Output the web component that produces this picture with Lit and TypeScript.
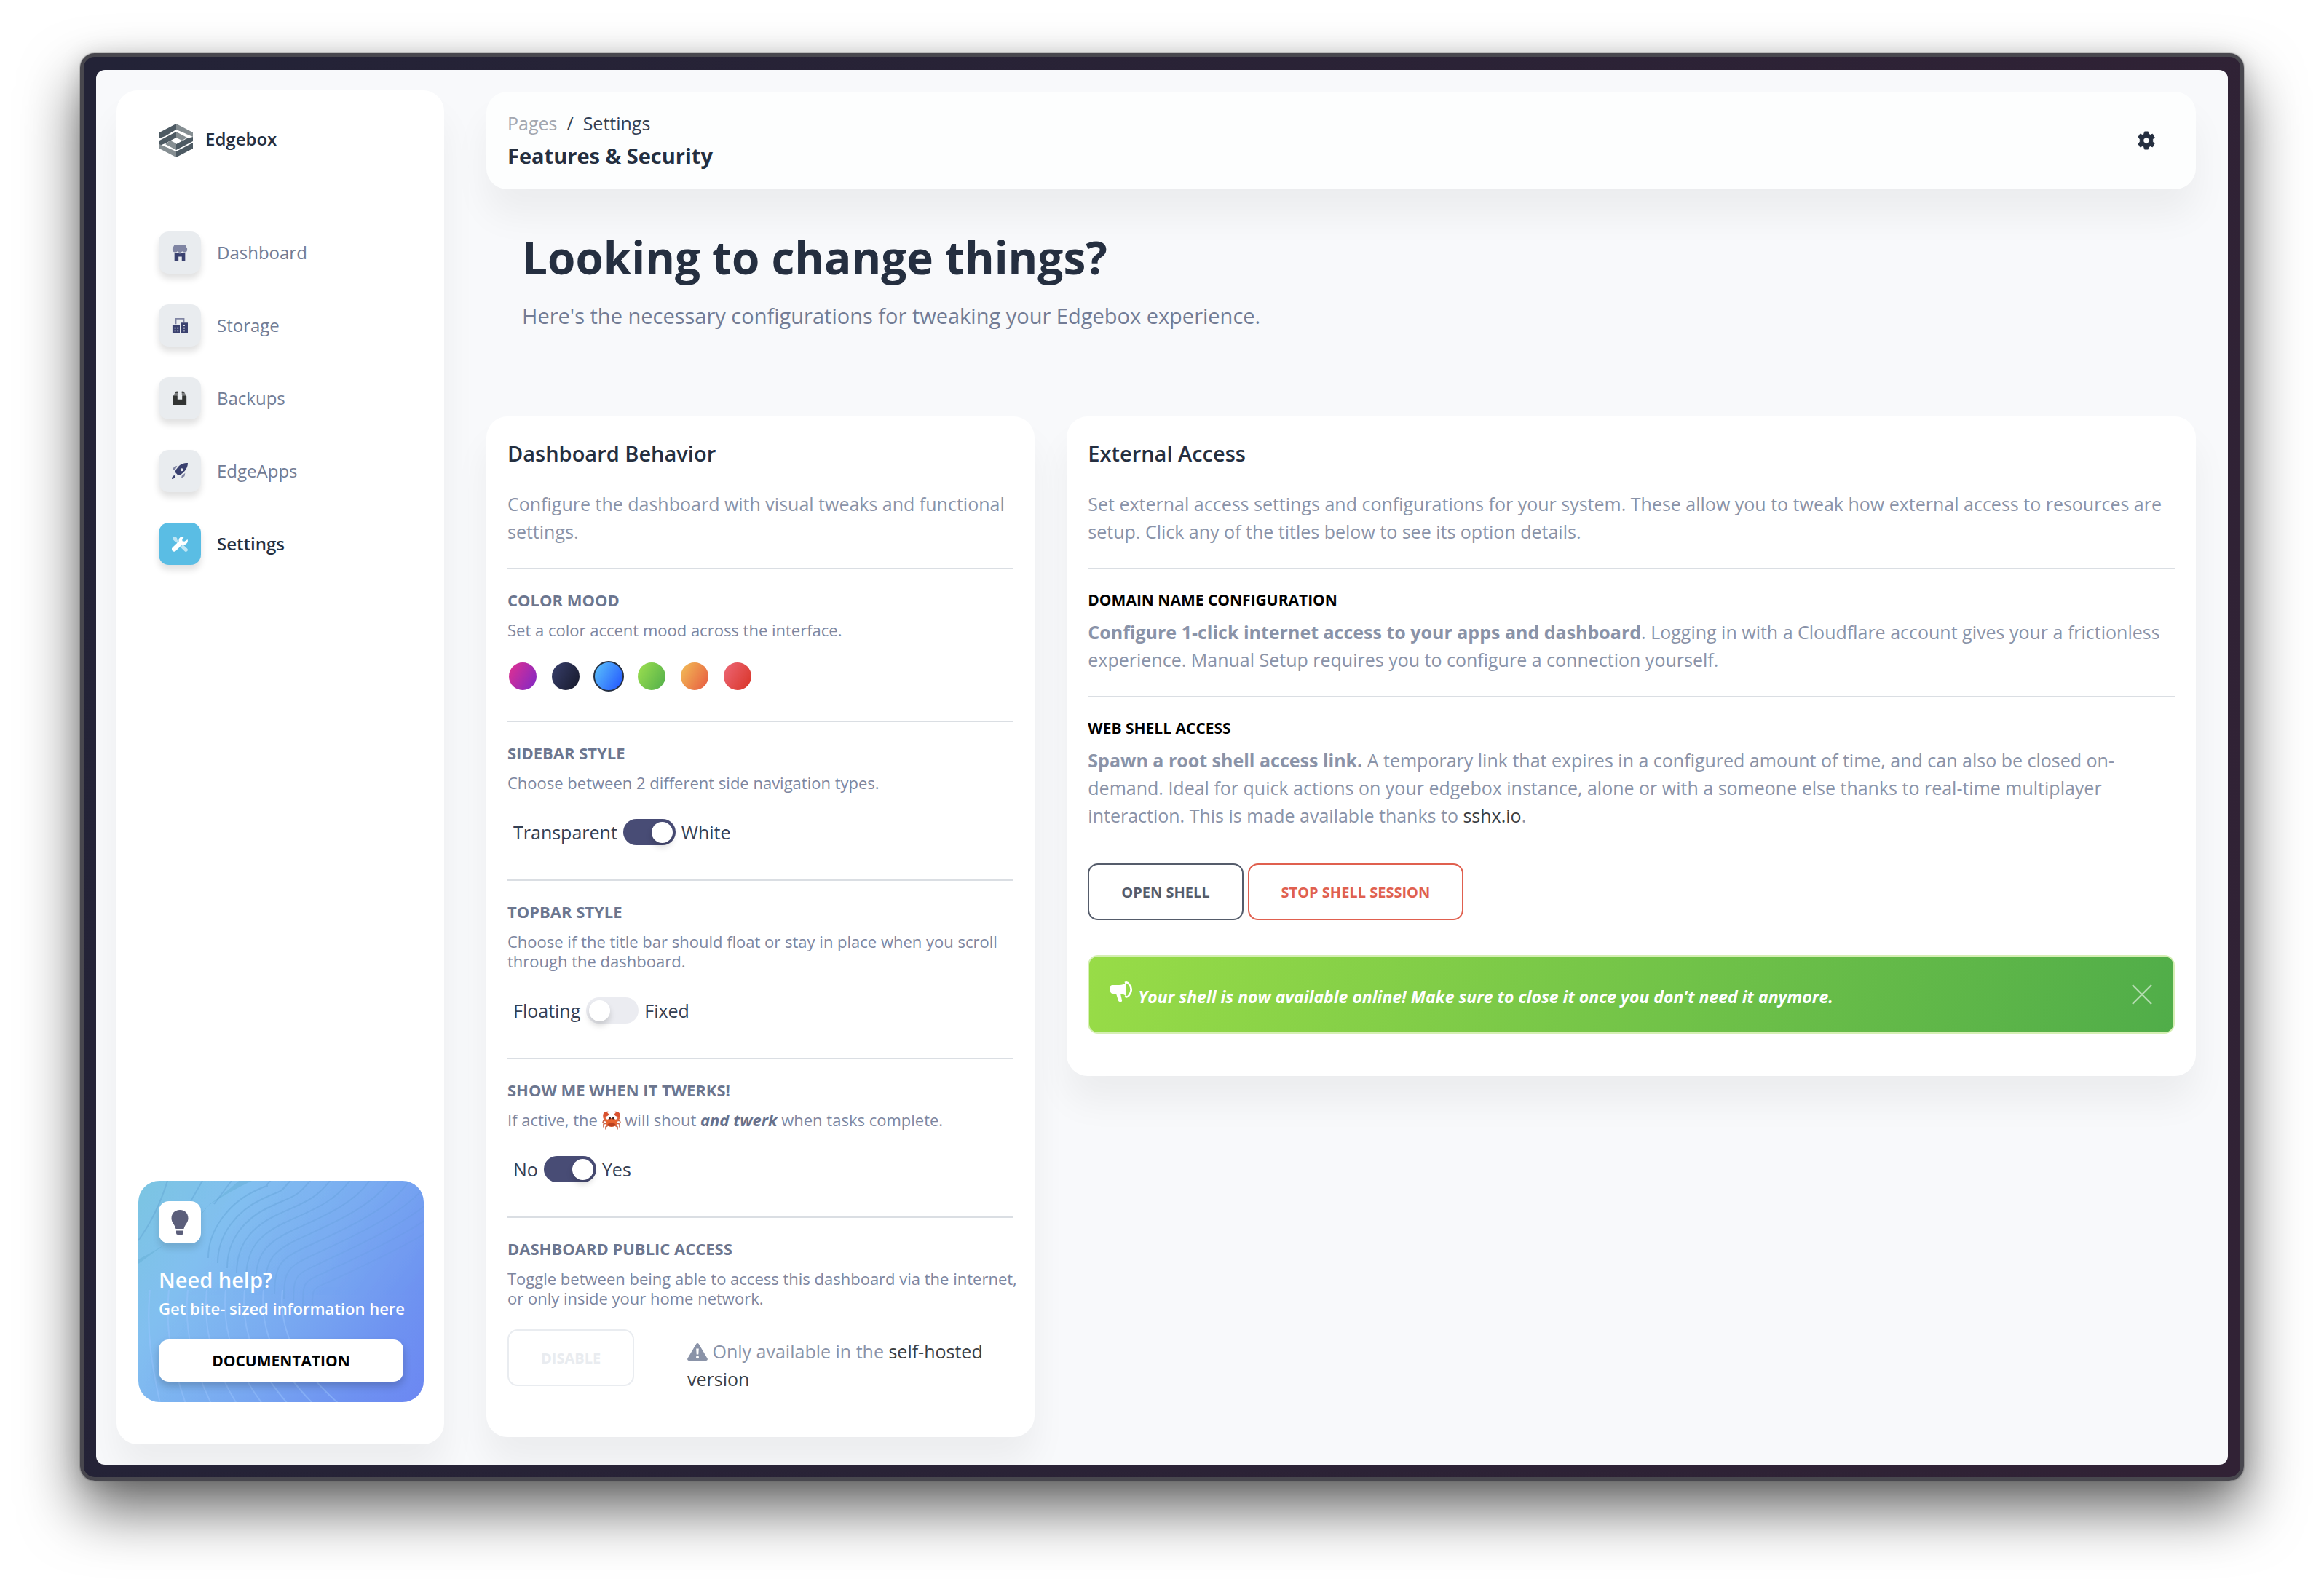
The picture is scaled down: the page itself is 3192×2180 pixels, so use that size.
import { LitElement, html, svg, css, nothing } from "lit";
import { customElement, property, state } from "lit/decorators.js";

const icons: Record<string, unknown> = {
  shop: svg`
    <path class="soft" d="M4 0h16l3 6v2a4 3.600 0 0 1-3.700 3.500A4 4 0 0 1 15.600 10a4.400 4.400 0 0 1-7.200 0 4 4 0 0 1-3.700 1.500A4 3.600 0 0 1 1 8V6z"/>
    <path class="solid" d="M4 13a6 6 0 0 0 4.400-.8 6.500 6.500 0 0 0 7.200 0A6 6 0 0 0 20 13v11h-5v-6h-5v6H4z"/>`,
  office: svg`
    <path class="soft" d="M5 1h14v7h-2V3H7v7H5z"/>
    <path class="solid" fill-rule="evenodd" d="M1 12h11v12H1zM14 8h10v16H14zM4 15h2v2H4zM8 15h2v2H8zM4 19h2v2H4zM8 19h2v2H8zM17.500 11h2v2h-2zM17.500 15h2v2h-2zM17.500 19h2v2h-2z"/>`,
  backup: svg`
    <path class="solid" d="M3 8h5.500v6h7V8H21a1 1 0 0 1 1 1v14H2V9a1 1 0 0 1 1-1z"/>
    <path class="soft" d="M6 2h3v5H3zM15 2h3l3 5h-6z"/>
    <path class="solid" d="M5 3l2-1h2v2H5zM15 2h2l2 2h-4z"/>`,
  rocket: svg`
    <path class="solid" fill-rule="evenodd" d="M24 0c-8 0-13 3-16 8-3 3-3 5-2 7l3 3c2 1 4 0 6-2 5-4 9-9 9-16zM15 8a2.200 2.200 0 1 1 0 4.400A2.200 2.200 0 0 1 15 8z"/>
    <path class="soft" d="M8 4L3 6 1 11l4-1zM20 15l-1 5-5 3 1-4z"/>
    <path class="solid" d="M4 18.500c-2 .5-4 2-4 5.500 3.500 0 5-2 5.500-4z"/>`,
  tools: svg`
    <path class="soft" d="M2 1.500L6 1l2 3v2l4 4-2.500 2.500L5 8H4L1 5zM15 13l3 1.500 5 4.500a2.600 2.600 0 0 1-4 4l-5-5z"/>
    <path class="solid" d="M23.500 5.500L19 8.500 15.800 8 15.500 5l3-3.500a6 6 0 0 0-8 7L1 17.500a3 3 0 0 0 5 5L15.500 13a6 6 0 0 0 8-7.500z"/>`,
};

const svgIcon = (name: string) =>
  html`<svg class="glyph" viewBox="0 0 24 24" aria-hidden="true">${icons[name]}</svg>`;

const warningIcon = html`<svg class="warn" viewBox="0 0 28 24" aria-hidden="true">
  <path fill="currentColor" fill-rule="evenodd" d="M12.300 1a2 2 0 0 1 3.400 0l11.900 20a2 2 0 0 1-1.700 3H2.100a2 2 0 0 1-1.700-3zM12.200 7.500l.5 8h2.600l.5-8zM14 17.200a2 2 0 1 0 0 4 2 2 0 0 0 0-4z"/>
</svg>`;

const crab = html`<svg class="crab" viewBox="0 0 26 26" role="img" aria-label="crab">
  <g fill="none" stroke="#c9654a" stroke-width="1.600" stroke-linecap="round">
    <path d="M6 14l-4-1-1 3M6 17l-4 1v4M8 20l-3 2v3M20 14l4-1 1 3M20 17l4 1v4M18 20l3 2v3"/>
  </g>
  <path fill="none" stroke="#e0663f" stroke-width="3" d="M7 14Q1 10 3.500 5M19 14q6-4 3.500-9"/>
  <path fill="#d9512f" d="M2 8C0 3 4 0 9 1 6 2 8 4 10 4 8 8 5 8 2 8zM24 8c2-5-2-8-7-7 3 1 1 3-1 3 2 4 5 4 8 4z"/>
  <ellipse cx="13" cy="16" rx="8" ry="6" fill="#e8632f"/>
  <ellipse cx="13" cy="19" rx="5.500" ry="2.400" fill="#b9401f"/>
  <circle cx="10.500" cy="10" r="1.600" fill="#3a2020"/><circle cx="15.500" cy="10" r="1.600" fill="#3a2020"/>
</svg>`;

const upperWaves = Array.from({ length: 12 }, (_, i) => {
  const [x0, y0] = [96 + 13 * i, 106 + 7 * i];
  const [x1, y1] = [160 + 10 * i, 14 + 11 * i];
  const x2 = 185 + 27 * i;
  return svg`<path opacity=${1 - i * 0.06} d="M${x0} ${y0} C${x0} ${y0 - 40} ${x1 - 34} ${y1 + 16} ${x1} ${y1} S${x2 - 22} ${18 + i * 3} ${x2} -4"/>`;
});
const lowerWaves = Array.from({ length: 8 }, (_, i) => {
  const x = 16 + i * 26;
  return svg`<path d="M${x} 150 C${x - 6} 210 ${x + 4 + i * 3} 260 ${x + 14 + i * 9} 306"/>`;
});

@customElement("toggle-row")
export class ToggleRow extends LitElement {
  @property() off = "";
  @property() on = "";
  @property({ type: Boolean }) checked = false;

  static styles = css`
    :host { display: block; margin: 36px 0 47px; }
    .row { display: flex; width: fit-content; align-items: center; gap: 8px; padding-left: 8px; font-size: 25px; line-height: 36px; color: #344054; cursor: pointer; }
    .switch {
      appearance: none; margin: 0; width: 72px; height: 36px; border-radius: 18px; padding: 4px;
      box-sizing: border-box; background: #ebecf1; display: flex; cursor: pointer;
    }
    .switch::before {
      content: ""; width: 29px; height: 29px; border-radius: 50%; background: #fff;
      box-shadow: 0 6px 9px rgba(0, 0, 0, 0.15);
    }
    .switch:checked { background: #484c75; justify-content: flex-end; }
  `;

  render() {
    return html`<label class="row">
      <span>${this.off}</span>
      <input class="switch" type="checkbox" role="switch" .checked=${this.checked}
        @change=${(e: Event) => (this.checked = (e.target as HTMLInputElement).checked)} />
      <span>${this.on}</span>
    </label>`;
  }
}

@customElement("app-root")
export class AppRoot extends LitElement {
  @state() private mood = "info";
  @state() private alertOpen = true;

  private nav = [
    ["Dashboard", "shop"],
    ["Storage", "office"],
    ["Backups", "backup"],
    ["EdgeApps", "rocket"],
    ["Settings", "tools"],
  ];
  private moods = ["primary", "dark", "info", "success", "warning", "danger"];

  static styles = css`
    :host {
      display: flex; box-sizing: border-box; min-height: 100vh; padding: 73px 110px 146px;
      background: #fff; font-family: "Open Sans", "Noto Sans", sans-serif; font-size: 25px; line-height: 38px; color: #8a93a8;
    }
    * { box-sizing: border-box; }
    h1, h2, h3, p, ul { margin: 0; padding: 0; }
    a { color: inherit; text-decoration: none; }
    button { font-family: inherit; cursor: pointer; }
    svg { display: block; }

    .frame {
      flex: 1; display: flex; padding: 18px 17px 17px; border: 5px solid #48474e; border-radius: 20px;
      background: linear-gradient(100deg, #232337, #312235);
      box-shadow: 0 40px 80px rgba(0, 0, 0, 0.6), 0 4px 30px rgba(0, 0, 0, 0.15), 0 0 2px rgba(0, 0, 0, 0.6);
    }
    .screen {
      flex: 1; display: flex; gap: 58px; padding: 28px 44px 28px 28px; border-radius: 12px;
      background: #f8f9fb; overflow: hidden;
    }
    .card, .sidebar, .topbar { background: #fff; border-radius: 29px; box-shadow: 0 36px 49px rgba(0, 0, 0, 0.05); }

    .sidebar { flex: none; width: 450px; display: flex; flex-direction: column; padding: 46px 28px 58px 30px; }
    .brand { display: flex; align-items: flex-start; gap: 16px; padding-left: 28px; margin-bottom: 102px; font-size: 24px; line-height: 42px; font-weight: 600; color: #252f40; }
    .logo { width: 48px; height: 46px; }
    .nav { list-style: none; display: flex; flex-direction: column; gap: 42px; padding-left: 28px; }
    .link { display: flex; align-items: center; gap: 22px; font-size: 24px; color: #727c95; }
    .tile {
      width: 58px; height: 58px; border-radius: 14px; display: grid; place-items: center; background: #e9ecef;
      box-shadow: 0 7px 10px rgba(0, 0, 0, 0.12);
    }
    .glyph { width: 22px; height: 22px; }
    .solid { fill: #3a416f; }
    .soft { fill: #3a416f; opacity: 0.6; }
    .backup .solid, .backup .soft { fill: #323433; }
    .active { color: #252f40; font-weight: 600; }
    .active .tile { background: #5abde4; }
    .active .solid, .active .soft { fill: #fff; }

    .help {
      position: relative; margin-top: auto; padding: 28px; border-radius: 29px; overflow: hidden; color: #fff;
      background: linear-gradient(125deg, #7bc5e2 0%, #82bff0 26%, #79aaf1 55%, #6e92f1 82%, #6c87f2 100%);
    }
    .waves { position: absolute; inset: 0; width: 100%; height: 100%; fill: none; stroke-width: 2; }
    .dark-waves { stroke: #4e8fc4; opacity: 0.28; }
    .light-waves { stroke: #9cc6ff; opacity: 0.45; }
    .help-body { position: relative; }
    .help .tile { background: #fff; margin-bottom: 32px; }
    .bulb { width: 24px; height: 34px; }
    .help-title { font-size: 29px; line-height: 36px; font-weight: 600; margin-bottom: 6px; }
    .help-text { font-size: 22px; line-height: 30px; font-weight: 600; white-space: nowrap; margin-bottom: 28px; }
    .docs {
      display: grid; place-items: center; height: 58px; border-radius: 14px; background: #fff; color: #000;
      font-size: 21px; font-weight: 700; box-shadow: 0 6px 12px rgba(0, 0, 0, 0.2);
    }

    .main { flex: 1; min-width: 0; padding-top: 2px; }
    .topbar { display: flex; align-items: center; justify-content: space-between; padding: 24px 56px 24px 29px; background: #fdfefe; }
    .crumbs { display: flex; gap: 13px; color: #344054; margin-bottom: 4px; }
    .crumb-parent { color: #a3a7b0; }
    .page-name { font-size: 29px; line-height: 44px; font-weight: 700; color: #252f40; }
    .gear { border: 0; background: none; padding: 0; }
    .gear svg { width: 24px; height: 26px; }

    .intro { padding: 54px 49px 117px; }
    .intro h1 { font-size: 62px; line-height: 78px; font-weight: 700; color: #252f40; margin-bottom: 20px; }
    .intro p { font-size: 29px; line-height: 43px; color: #727c95; }

    .grid { display: grid; grid-template-columns: repeat(12, minmax(0, 1fr)); gap: 44px; align-items: start; }
    .card { padding: 29px; }
    .behavior { grid-column: span 4; padding-bottom: 61px; }
    .external { grid-column: span 8; padding-bottom: 58px; }
    .card h2 { font-size: 29px; line-height: 44px; font-weight: 600; color: #252f40; margin-bottom: 28px; }
    .rule { border: 0; height: 2px; margin: 0 0 24px; background: #dadee3; }
    .lead { margin-bottom: 31px; }
    .card h3 { font-size: 22px; line-height: 36px; font-weight: 700; color: #6c768f; margin-bottom: 10px; }
    .external h3 { font-size: 21px; color: #000; margin-bottom: 7px; }
    .note { font-size: 22px; line-height: 27px; color: #7d86a0; margin-right: -8px; }
    .note em, .strong { font-weight: 700; }
    .note em { color: #67718c; }
    .crab { display: inline-block; width: 26px; height: 26px; vertical-align: -5px; }
    .dark { color: #3c3f44; }

    .moods { display: flex; gap: 17px; margin: 29px 0 40px; }
    .mood { width: 42px; height: 42px; padding: 0; border: 2px solid transparent; border-radius: 50%; background-origin: border-box; background-clip: padding-box; }
    .picked { border-color: #252f40; background-clip: border-box; background-origin: padding-box; }
    .primary { background-image: linear-gradient(120deg, #e8308c, #7928ca); }
    .dark-mood { background-image: linear-gradient(120deg, #3a416f, #141727); }
    .info { background-image: linear-gradient(120deg, #5cc4fa, #2152ff); }
    .success { background-image: linear-gradient(120deg, #a2e34f, #4cab4a); }
    .warning { background-image: linear-gradient(120deg, #f3c558, #e6533f); }
    .danger { background-image: linear-gradient(120deg, #ee6b7c, #d73021); }

    .access { display: grid; grid-template-columns: 247px 1fr; align-items: start; margin-top: 29px; }
    .access p { padding-top: 11px; }
    .warn { display: inline-block; width: 28px; height: 24px; vertical-align: -3px; }
    .btn {
      height: 78px; padding: 0 44px; border: 2px solid currentColor; border-radius: 14px; background: none;
      font-size: 20px; font-weight: 700; justify-self: start; white-space: nowrap;
    }
    .btn-off { color: #e9ecf0; cursor: default; }
    .btn-open { color: #555c6b; }
    .btn-stop { color: #e0604f; }
    .actions { display: flex; gap: 6px; margin: 47px 0 48px; }
    .alert {
      display: flex; align-items: center; gap: 8px; height: 108px; padding: 0 29px; border: 2px solid #d5efb4; border-radius: 14px;
      background: linear-gradient(105deg, #98dc47, #50ad49); color: #fff;
    }
    .horn { width: 30px; height: 28px; margin-bottom: 8px; }
    .alert-text { flex: 1; padding-top: 6px; font-size: 23px; font-weight: 700; font-style: italic; }
    .close { border: 0; background: none; padding: 0; }
    .close svg { width: 28px; height: 28px; }
  `;

  render() {
    return html`
      <div class="frame">
        <div class="screen">
          ${this.sidebar()}
          <main class="main">
            <header class="topbar">
              <div>
                <nav class="crumbs" aria-label="Breadcrumb">
                  <a class="crumb-parent" href="#">Pages</a><span>/</span><span>Settings</span>
                </nav>
                <div class="page-name">Features &amp; Security</div>
              </div>
              <button class="gear" aria-label="Open configurator">
                <svg viewBox="0 0 24 26" aria-hidden="true">
                  <path fill="#252f40" fill-rule="evenodd" stroke="#252f40" stroke-width="1" stroke-linejoin="round"
                    d="M9.500 1h5l.7 3.200 2.200 1.200 3.200-1.200 2.500 4.400L20.700 11v4l2.400 2.400-2.500 4.400-3.200-1.200-2.200 1.200-.7 3.200h-5l-.7-3.200-2.200-1.200-3.200 1.200-2.500-4.400L3.300 15v-4L.9 8.600l2.500-4.400 3.200 1.200 2.200-1.200zM12 8.800a4.200 4.200 0 1 0 0 8.400 4.200 4.200 0 0 0 0-8.400z"/>
                </svg>
              </button>
            </header>
            <section class="intro">
              <h1>Looking to change things?</h1>
              <p>Here's the necessary configurations for tweaking your Edgebox experience.</p>
            </section>
            <div class="grid">${this.behavior()}${this.external()}</div>
          </main>
        </div>
      </div>
    `;
  }

  private sidebar() {
    return html`
      <aside class="sidebar">
        <a class="brand" href="#">
          <svg class="logo" viewBox="-1 0 48 46" aria-hidden="true">
            <path fill="#4d5a63" d="M23 0v8L8 17 0 20v-8zM0 23l23-12v8L8 27l-8 3zM46 18v6L23 36v-8l15-8zM46 26v8L23 46v-8z"/>
            <path fill="#858e92" d="M23 0l23 12v6L23 8zM23 11l15 8-7 4-8-4zM23 36L8 28l7-5 8 4zM0 28v6l23 12v-8z"/>
            <path fill="#fff" d="M23 20l5 3-5 3-5-3z"/>
          </svg>
          <span>Edgebox</span>
        </a>
        <ul class="nav">
          ${this.nav.map(
            ([label, icon]) => html`<li>
              <a class="link ${icon} ${label === "Settings" ? "active" : ""}" href="#">
                <span class="tile">${svgIcon(icon)}</span><span>${label}</span>
              </a>
            </li>`,
          )}
        </ul>
        <div class="help">
          <svg class="waves" viewBox="0 0 392 304" preserveAspectRatio="none" aria-hidden="true">
            <path fill="#5fa9d0" opacity="0.4" d="M0 114q24-18 50-36 30-24 46-44Q126 14 156 0h-18Q116 20 98 32q-26 34-46 46Q20 98 0 108z"/>
            <g class="dark-waves"><path d="M0 82Q26 46 40 0M72 28L88 0M104 32L128 0"/>${upperWaves}</g>
            <g class="light-waves">${lowerWaves}</g>
          </svg>
          <div class="help-body">
            <div class="tile">
              <svg class="bulb" viewBox="0 0 24 34" aria-hidden="true">
                <path fill="#5b5e7a" d="M12 0c7 0 11.500 5 11.500 11.500 0 6-4.500 8.500-6 14.500h-11C5 20 .5 17.500.5 11.500.5 5 5 0 12 0zM7 28.500h10V32a2 2 0 0 1-2 2H9a2 2 0 0 1-2-2z"/>
              </svg>
            </div>
            <div class="help-title">Need help?</div>
            <p class="help-text">Get bite- sized information here</p>
            <a class="docs" href="#">DOCUMENTATION</a>
          </div>
        </div>
      </aside>
    `;
  }

  private behavior() {
    return html`
      <section class="card behavior">
        <h2>Dashboard Behavior</h2>
        <p class="lead">Configure the dashboard with visual tweaks and functional settings.</p>
        <hr class="rule" />
        <h3>COLOR MOOD</h3>
        <p class="note">Set a color accent mood across the interface.</p>
        <div class="moods">
          ${this.moods.map(
            (m) => html`<button
              class="mood ${m === "dark" ? "dark-mood" : m} ${m === this.mood ? "picked" : ""}"
              aria-label=${m} aria-pressed=${m === this.mood} @click=${() => (this.mood = m)}></button>`,
          )}
        </div>
        <hr class="rule" />
        <h3>SIDEBAR STYLE</h3>
        <p class="note">Choose between 2 different side navigation types.</p>
        <toggle-row off="Transparent" on="White" checked></toggle-row>
        <hr class="rule" />
        <h3>TOPBAR STYLE</h3>
        <p class="note">Choose if the title bar should float or stay in place when you scroll through the dashboard.</p>
        <toggle-row off="Floating" on="Fixed"></toggle-row>
        <hr class="rule" />
        <h3>SHOW ME WHEN IT TWERKS!</h3>
        <p class="note">If active, the ${crab} will shout <em>and twerk</em> when tasks complete.</p>
        <toggle-row off="No" on="Yes" checked></toggle-row>
        <hr class="rule" />
        <h3>DASHBOARD PUBLIC ACCESS</h3>
        <p class="note">Toggle between being able to access this dashboard via the internet, or only inside your home network.</p>
        <div class="access">
          <button class="btn btn-off" disabled>DISABLE</button>
          <p>${warningIcon} Only available in the <a class="dark" href="#">self-hosted version</a></p>
        </div>
      </section>
    `;
  }

  private external() {
    return html`
      <section class="card external">
        <h2>External Access</h2>
        <p class="lead">Set external access settings and configurations for your system. These allow you to tweak how external access to resources are setup. Click any of the titles below to see its option details.</p>
        <hr class="rule" />
        <h3><a href="#">DOMAIN NAME CONFIGURATION</a></h3>
        <p class="lead"><b class="strong">Configure 1-click internet access to your apps and dashboard</b>. Logging in with a Cloudflare account gives your a frictionless experience. Manual Setup requires you to configure a connection yourself.</p>
        <hr class="rule" />
        <h3><a href="#">WEB SHELL ACCESS</a></h3>
        <p><b class="strong">Spawn a root shell access link.</b> A temporary link that expires in a configured amount of time, and can also be closed on-demand. Ideal for quick actions on your edgebox instance, alone or with a someone else thanks to real-time multiplayer interaction. This is made available thanks to <a class="dark" href="#">sshx.io</a>.</p>
        <div class="actions">
          <button class="btn btn-open">OPEN SHELL</button>
          <button class="btn btn-stop">STOP SHELL SESSION</button>
        </div>
        ${this.alertOpen
          ? html`<div class="alert" role="alert">
              <svg class="horn" viewBox="0 0 30 28" aria-hidden="true">
                <path fill="#fff" d="M3 5h9c4 0 7-1 10-4v20c-3-3-5-4-8-4l2 9a1.500 1.500 0 0 1-1.500 2H13a2 2 0 0 1-2-1.500L8 17H4a4 4 0 0 1-4-4V8a3 3 0 0 1 3-3z"/>
                <path fill="none" stroke="#fff" stroke-width="2.600" d="M20 2c2-1 4-.5 5.500 1.500 4 5 4 11 0 16-1.500 2-3.500 2.500-5.500 1"/>
              </svg>
              <div class="alert-text">Your shell is now available online! Make sure to close it once you don't need it anymore.</div>
              <button class="close" aria-label="Close" @click=${() => (this.alertOpen = false)}>
                <svg viewBox="0 0 28 28" aria-hidden="true"><path d="M1 1l26 26M27 1L1 27" stroke="#fff" stroke-width="2.400" opacity="0.55"/></svg>
              </button>
            </div>`
          : nothing}
      </section>
    `;
  }
}
